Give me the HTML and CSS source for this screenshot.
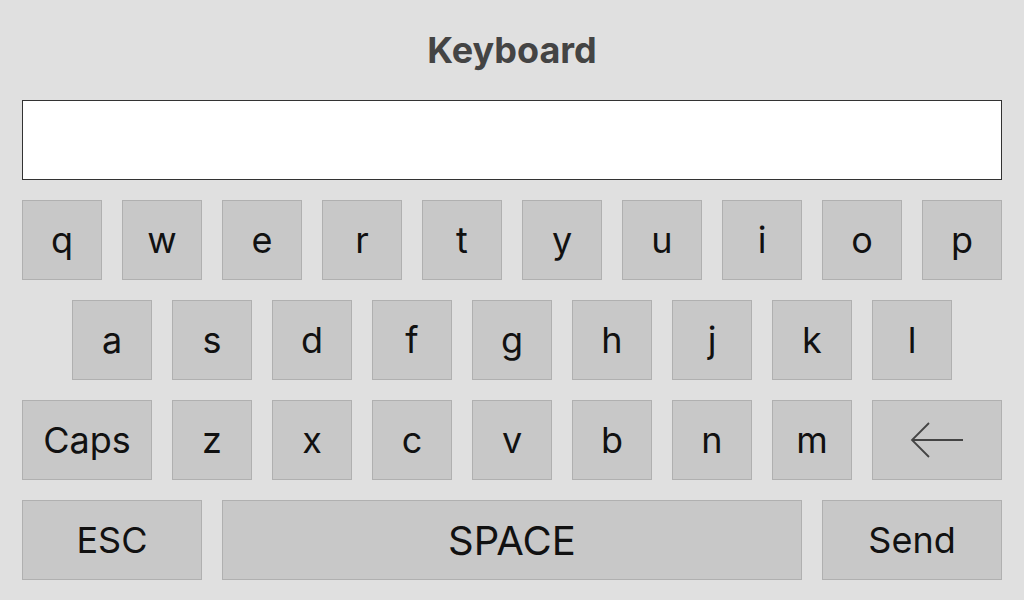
FILE: index.html
```html
<!DOCTYPE html>
<html>
<head>
<meta charset="utf-8">
<link rel="stylesheet" href="styles.css">
</head>
<body>
<div class="app">
  <h1 class="title">Keyboard</h1>
  <div class="input"></div>
  <div class="keys">
    <div class="row">
      <div class="key">q</div><div class="key">w</div><div class="key">e</div><div class="key">r</div><div class="key">t</div><div class="key">y</div><div class="key">u</div><div class="key">i</div><div class="key">o</div><div class="key">p</div>
    </div>
    <div class="row">
      <div class="key">a</div><div class="key">s</div><div class="key">d</div><div class="key">f</div><div class="key">g</div><div class="key">h</div><div class="key">j</div><div class="key">k</div><div class="key">l</div>
    </div>
    <div class="row">
      <div class="key wide">Caps</div><div class="key">z</div><div class="key">x</div><div class="key">c</div><div class="key">v</div><div class="key">b</div><div class="key">n</div><div class="key">m</div>
      <div class="key wide"><svg width="56" height="38" viewBox="0 0 56 38"><path d="M3 19 H54 M20 2 L3 19 L20 36" fill="none" stroke="#444" stroke-width="1.8"/></svg></div>
    </div>
    <div class="row">
      <div class="key action">ESC</div><div class="key space">SPACE</div><div class="key action">Send</div>
    </div>
  </div>
</div>
</body>
</html>
```
FILE: styles.css
```css
html, body {
  margin: 0;
  padding: 0;
  background: #e0e0e0;
}
.app {
  width: 1024px;
  height: 600px;
  padding: 0 22px;
  box-sizing: border-box;
  font-family: Inter, "Noto Sans", sans-serif;
}
.title {
  margin: 0;
  height: 100px;
  display: flex;
  align-items: center;
  justify-content: center;
  font-size: 36px;
  font-weight: 700;
  color: #444;
}
.input {
  height: 80px;
  box-sizing: border-box;
  background: #fff;
  border: 1px solid #333;
}
.keys {
  margin-top: 20px;
  display: flex;
  flex-direction: column;
  gap: 20px;
}
.row {
  display: flex;
  justify-content: center;
  gap: 20px;
}
.key {
  width: 80px;
  height: 80px;
  box-sizing: border-box;
  background: #c8c8c8;
  border: 1px solid #b0b0b0;
  display: flex;
  align-items: center;
  justify-content: center;
  font-size: 36px;
  color: #111;
}
.key.wide { width: 130px; }
.key.action { width: 180px; }
.key.space { width: 580px; font-size: 40px; }
```
